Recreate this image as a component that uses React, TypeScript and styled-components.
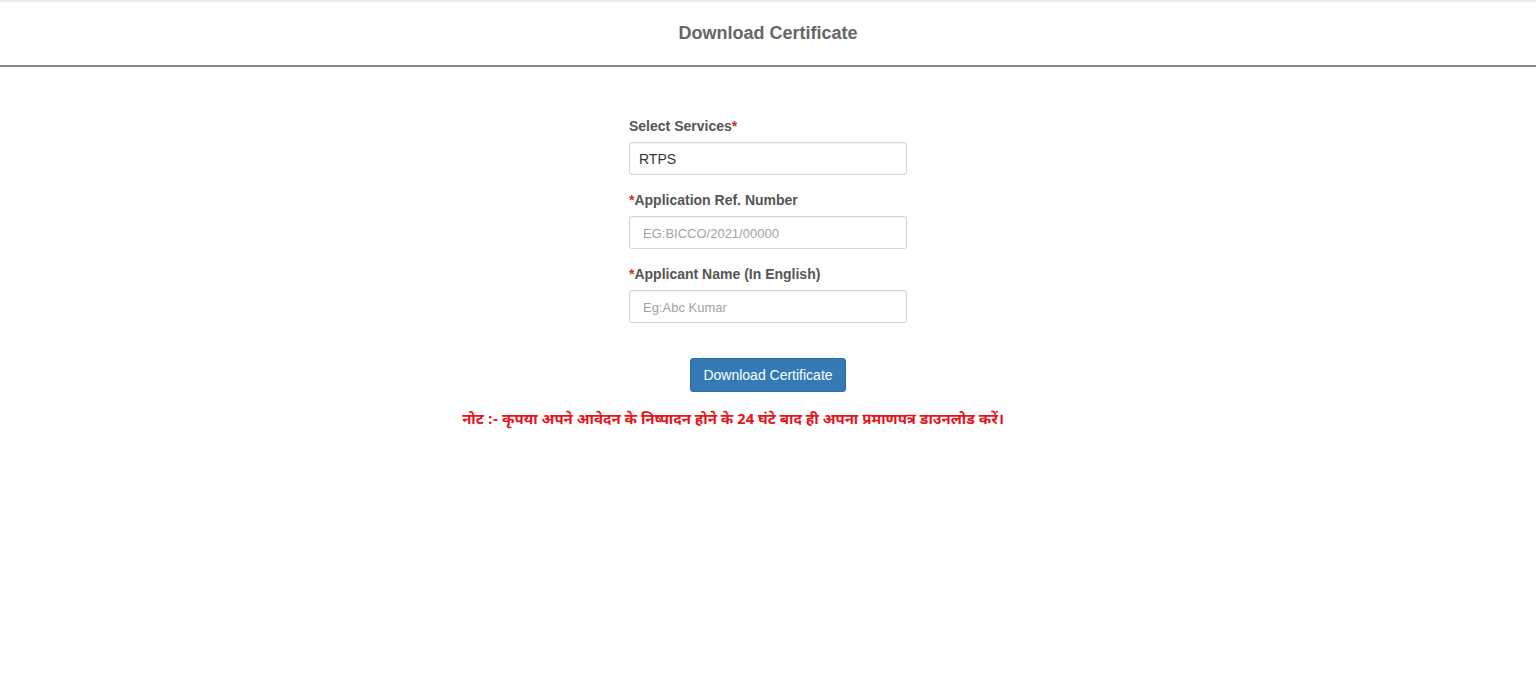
import React from 'react'
import styled, { createGlobalStyle } from 'styled-components'

const GlobalStyle = createGlobalStyle`
  html, body {
    margin: 0;
    padding: 0;
    background: #fff;
    font-family: "Liberation Sans", Arial, sans-serif;
    font-size: 14px;
    color: #333;
  }
`

const Page = styled.div`
  min-height: 694px;
  border-top: 2px solid #ececec;
  box-sizing: border-box;
`

const Header = styled.header`
  height: 63px;
  display: flex;
  align-items: center;
  justify-content: center;
  border-bottom: 2px solid #8a8a8a;
`

const Title = styled.h1`
  margin: 0;
  font-size: 18px;
  font-weight: 700;
  color: #666;
`

const Main = styled.main`
  display: flex;
  flex-direction: column;
  align-items: center;
  padding-top: 51px;
`

const Form = styled.form`
  width: 278px;
  display: flex;
  flex-direction: column;
  gap: 17px;
`

const Field = styled.div`
  display: flex;
  flex-direction: column;
`

const Label = styled.label`
  font-size: 14px;
  font-weight: 700;
  color: #555;
  margin-bottom: 7px;
  line-height: 17px;
`

const Star = styled.span`
  color: #c9302c;
`

const Input = styled.input<{ $placeholder?: boolean }>`
  height: 33px;
  box-sizing: border-box;
  border: 1px solid #d4d4d4;
  border-radius: 3px;
  padding: 0 12px 0 ${(p) => (p.$placeholder ? 13 : 9)}px;
  font-family: "Liberation Sans", Arial, sans-serif;
  font-size: 14px;
  color: #333;
  outline: none;
  box-shadow: inset 0 1px 1px rgba(0, 0, 0, 0.04);

  &::placeholder {
    color: #a3a3a3;
    font-size: 13px;
  }
`

const Actions = styled.div`
  display: flex;
  justify-content: center;
  margin-top: 18px;
`

const Button = styled.button`
  height: 34px;
  padding: 0 12px;
  background: #337ab7;
  border: 1px solid #2e6da4;
  border-radius: 3px;
  color: #fff;
  font-family: "Liberation Sans", Arial, sans-serif;
  font-size: 14px;
  cursor: pointer;
`

const Note = styled.p`
  margin: 19px 70px 0 0;
  color: #e8141a;
  font-weight: 700;
  font-size: 15px;
  font-family: "Noto Sans Devanagari", "Lohit Devanagari", "Noto Sans", "Liberation Sans", sans-serif;
  text-align: center;
`

export default function App() {
  return (
    <>
      <GlobalStyle />
      <Page>
        <Header>
          <Title>Download Certificate</Title>
        </Header>
        <Main>
          <Form onSubmit={(e) => e.preventDefault()}>
            <Field>
              <Label>
                Select Services<Star>*</Star>
              </Label>
              <Input defaultValue="RTPS" />
            </Field>
            <Field>
              <Label>
                <Star>*</Star>Application Ref. Number
              </Label>
              <Input $placeholder placeholder="EG:BICCO/2021/00000" />
            </Field>
            <Field>
              <Label>
                <Star>*</Star>Applicant Name (In English)
              </Label>
              <Input $placeholder placeholder="Eg:Abc Kumar" />
            </Field>
            <Actions>
              <Button type="submit">Download Certificate</Button>
            </Actions>
          </Form>
          <Note>
            नोट :- कृपया अपने आवेदन के निष्पादन होने के 24 घंटे बाद ही अपना प्रमाणपत्र डाउनलोड करें।
          </Note>
        </Main>
      </Page>
    </>
  )
}
